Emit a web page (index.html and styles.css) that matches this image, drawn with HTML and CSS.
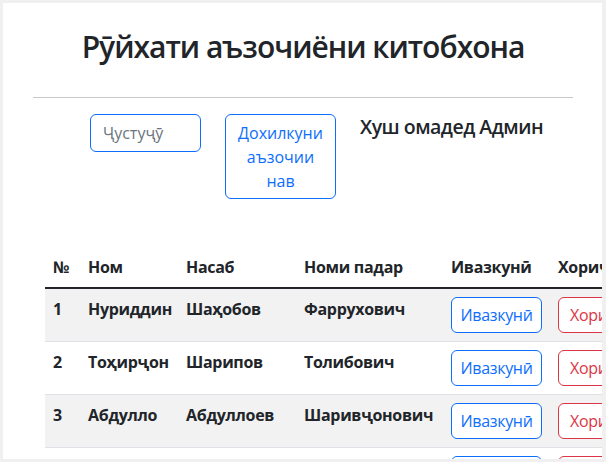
FILE: index.html
```html
<!DOCTYPE html>
<html lang="tg">
<head>
<meta charset="utf-8">
<title>Рӯйхати аъзочиёни китобхона</title>
<link rel="stylesheet" href="styles.css">
</head>
<body>
<div class="frame">
  <div class="head">
    <h1 class="title">Рӯйхати аъзочиёни китобхона</h1>
    <hr class="rule">
  </div>
  <div class="toolbar">
    <input class="search" type="text" placeholder="Ҷустуҷӯ">
    <button class="btn btn-blue btn-add">Дохилкуни аъзочии нав</button>
    <h5 class="welcome">Хуш омадед Админ</h5>
  </div>
  <table class="members">
    <colgroup>
      <col class="c-num"><col class="c-name"><col class="c-last"><col class="c-father"><col class="c-edit"><col class="c-del">
    </colgroup>
    <thead>
      <tr><th>№</th><th>Ном</th><th>Насаб</th><th>Номи падар</th><th>Ивазкунӣ</th><th>Хориҷ</th></tr>
    </thead>
    <tbody>
      <tr class="odd"><th>1</th><th>Нуриддин</th><th>Шаҳобов</th><th>Фаррухович</th><td><button class="btn btn-blue btn-row btn-edit">Ивазкунӣ</button></td><td><button class="btn btn-red btn-row">Хориҷ</button></td></tr>
      <tr><th>2</th><th>Тоҳирҷон</th><th>Шарипов</th><th>Толибович</th><td><button class="btn btn-blue btn-row btn-edit">Ивазкунӣ</button></td><td><button class="btn btn-red btn-row">Хориҷ</button></td></tr>
      <tr class="odd"><th>3</th><th>Абдулло</th><th>Абдуллоев</th><th>Шаривҷонович</th><td><button class="btn btn-blue btn-row btn-edit">Ивазкунӣ</button></td><td><button class="btn btn-red btn-row">Хориҷ</button></td></tr>
      <tr><th>4</th><th>Фирдавс</th><th>Каримов</th><th>Рустамович</th><td><button class="btn btn-blue btn-row btn-edit">Ивазкунӣ</button></td><td><button class="btn btn-red btn-row">Хориҷ</button></td></tr>
    </tbody>
  </table>
</div>
</body>
</html>
```

FILE: styles.css
```css
html, body {
  margin: 0;
  padding: 0;
  background: #f0f0f0;
}

body {
  font-family: "Open Sans", "Noto Sans", sans-serif;
  color: #212529;
  font-size: 16px;
  line-height: 24px;
}

.frame {
  margin: 3px;
  width: 599px;
  height: 456px;
  overflow: hidden;
  background: #ffffff;
}

.head {
  margin-left: 30px;
  width: 540px;
  padding-top: 25px;
}

.title {
  margin: 0;
  font-size: 30px;
  line-height: 37px;
  font-weight: 600;
  letter-spacing: -1px;
  text-align: center;
}

.rule {
  margin: 32px 0 0 0;
  border: 0;
  border-top: 1px solid #c8c9ca;
  height: 0;
}

.toolbar {
  display: flex;
  align-items: flex-start;
  margin-top: 16px;
  padding-left: 87px;
}

.search {
  box-sizing: border-box;
  width: 111px;
  height: 38px;
  padding: 6px 12px;
  font-family: inherit;
  font-size: 16px;
  line-height: 24px;
  color: #212529;
  border: 1px solid #0d6efd;
  border-radius: 6px;
  outline: none;
  background: #fff;
}

.search::placeholder {
  color: #6c757d;
}

.btn {
  box-sizing: border-box;
  font-family: inherit;
  font-size: 16px;
  line-height: 24px;
  background: #fff;
  border: 1px solid;
  border-radius: 6px;
  text-align: center;
  margin: 0;
}

.btn-blue {
  color: #0d6efd;
  border-color: #0d6efd;
}

.btn-red {
  color: #dc3545;
  border-color: #dc3545;
}

.btn-add {
  width: 111px;
  margin-left: 24px;
  padding: 6px 6px 5px;
}

.welcome {
  margin: 1px 0 0 24px;
  font-size: 19.5px;
  line-height: 24px;
  font-weight: 600;
  letter-spacing: -0.5px;
}

.members {
  margin-top: 48px;
  margin-left: 42px;
  border-collapse: collapse;
  table-layout: fixed;
  width: 620px;
}

.c-num { width: 35px; }
.c-name { width: 98px; }
.c-last { width: 118px; }
.c-father { width: 147px; }
.c-edit { width: 107px; }
.c-del { width: 115px; }

.members th,
.members td {
  padding: 8px;
  text-align: left;
  vertical-align: top;
  white-space: nowrap;
  font-weight: 700;
  letter-spacing: -0.3px;
  border-bottom: 1px solid #dee2e6;
}

.members thead th {
  border-bottom: 2px solid #212529;
}

.members tr.odd th,
.members tr.odd td {
  background: #f2f2f2;
}

.btn-row {
  height: 36px;
  padding: 5px 11px;
  font-weight: 400;
  letter-spacing: -0.3px;
}

.btn-edit {
  width: 91px;
  padding: 5px 4px;
}
```
